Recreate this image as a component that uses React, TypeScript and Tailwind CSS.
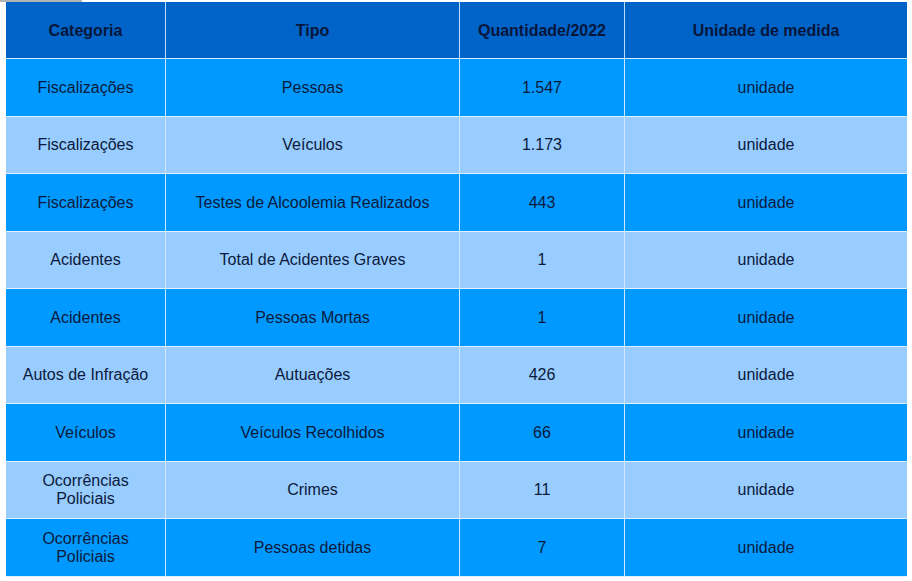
import React from "react";

const rows: [string, string, string, string][] = [
  ["Fiscalizações", "Pessoas", "1.547", "unidade"],
  ["Fiscalizações", "Veículos", "1.173", "unidade"],
  ["Fiscalizações", "Testes de Alcoolemia Realizados", "443", "unidade"],
  ["Acidentes", "Total de Acidentes Graves", "1", "unidade"],
  ["Acidentes", "Pessoas Mortas", "1", "unidade"],
  ["Autos de Infração", "Autuações", "426", "unidade"],
  ["Veículos", "Veículos Recolhidos", "66", "unidade"],
  ["Ocorrências Policiais", "Crimes", "11", "unidade"],
  ["Ocorrências Policiais", "Pessoas detidas", "7", "unidade"],
];

export default function App() {
  return (
    <div
      className="w-[912px] h-[581px] bg-white text-[#0b1a3c] text-[16px] leading-[18px]"
      style={{ fontFamily: '"Liberation Sans", Arial, sans-serif' }}
    >
      <div className="w-[82px] h-[2px] bg-[#b4b4b4]" />
      <div className="ml-[6px] w-[901px] flex flex-col">
        <div className="grid grid-cols-[160px_294px_165px_282px] h-[57px] bg-[#0063c8] font-bold text-[#08163a] border-b border-[#d9ecff]">
          <div className="flex items-center justify-center pt-[2px] border-r border-[#b9dcff]">Categoria</div>
          <div className="flex items-center justify-center pt-[2px] border-r border-[#b9dcff]">Tipo</div>
          <div className="flex items-center justify-center pt-[2px] border-r border-[#b9dcff]">Quantidade/2022</div>
          <div className="flex items-center justify-center pt-[2px]">Unidade de medida</div>
        </div>
        {rows.map((r, i) => (
          <div
            key={i}
            className={
              "grid grid-cols-[160px_294px_165px_282px] border-b border-[#e3f1ff] " +
              (i % 2 === 0 ? "h-[58px] bg-[#0099ff]" : "h-[57px] bg-[#99ccff]")
            }
          >
            <div className="flex items-center justify-center text-center border-r border-[#cfe7ff] px-[12px]">{r[0]}</div>
            <div className="flex items-center justify-center text-center border-r border-[#cfe7ff]">{r[1]}</div>
            <div className="flex items-center justify-center text-center border-r border-[#cfe7ff]">{r[2]}</div>
            <div className="flex items-center justify-center text-center">{r[3]}</div>
          </div>
        ))}
      </div>
    </div>
  );
}
